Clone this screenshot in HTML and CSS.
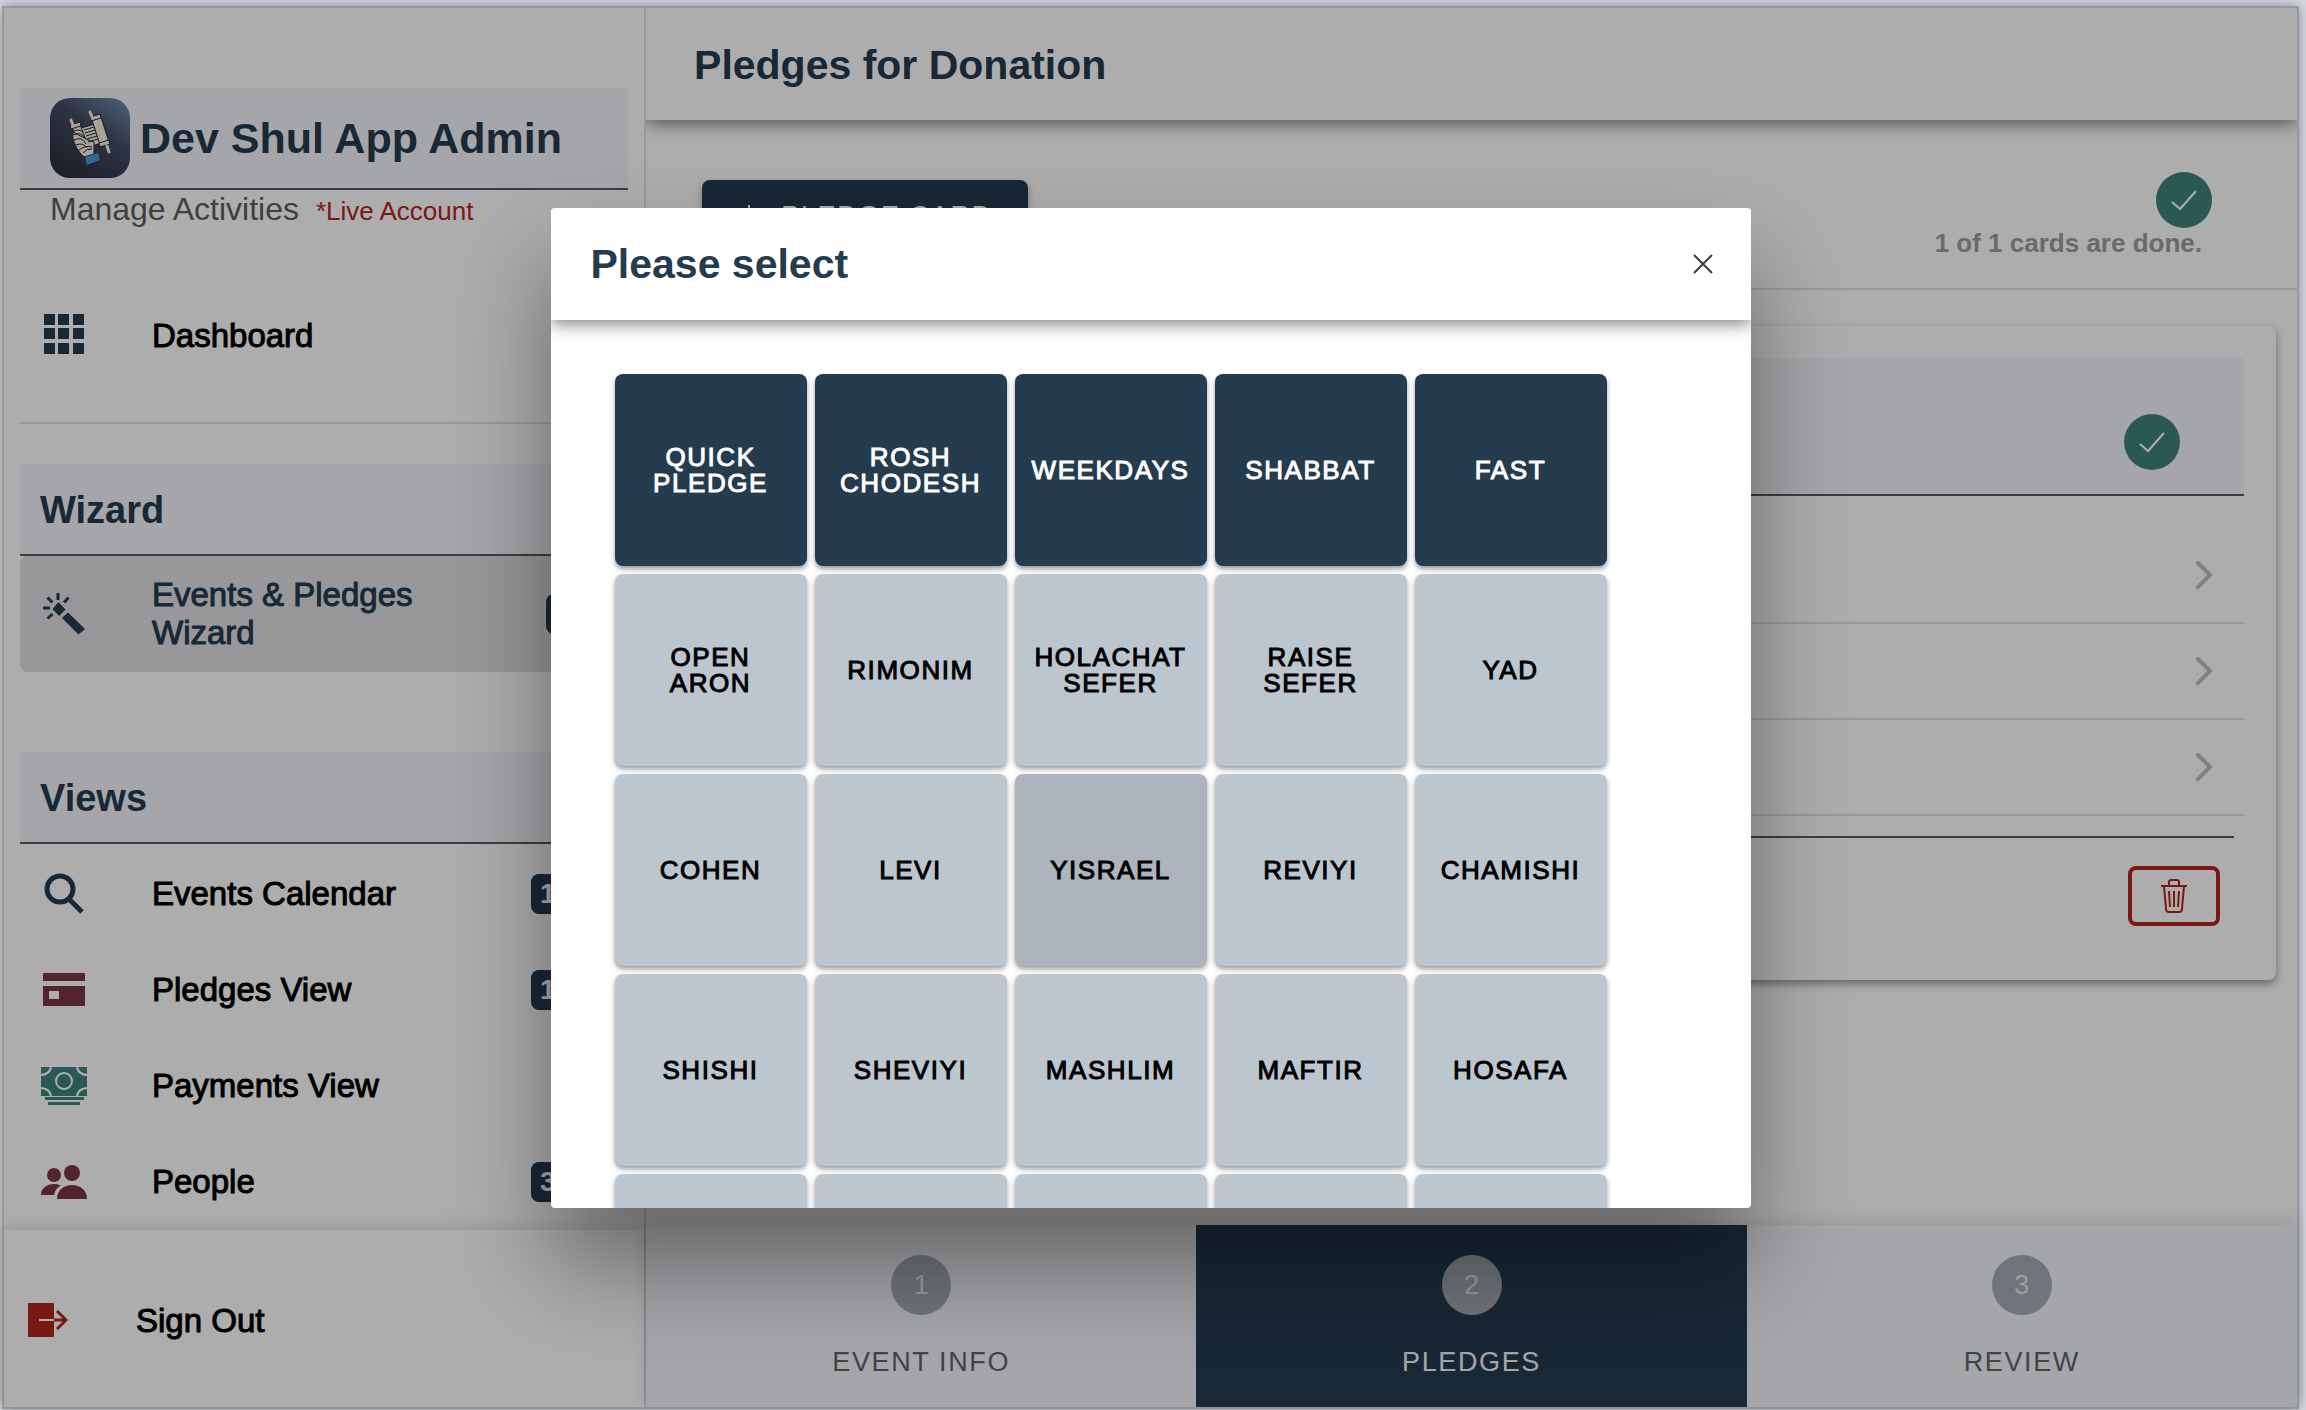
FILE: index.html
```html
<!DOCTYPE html>
<html lang="en">
<head>
  <meta charset="utf-8">
  <title>Dev Shul App Admin</title>
  <link rel="stylesheet" href="styles.css">
</head>
<body>
  <div class="app">
    <aside class="sidebar">
      <div class="menu">
        <header class="brand">
          <svg class="logo" viewBox="0 0 80 80">
            <defs>
              <linearGradient id="logo-bg" x1="1" y1="0" x2="0.3" y2="1">
                <stop offset="0" stop-color="#7590b4"/>
                <stop offset="0.45" stop-color="#434f66"/>
                <stop offset="1" stop-color="#2c2e3d"/>
              </linearGradient>
            </defs>
            <rect width="80" height="80" rx="20" fill="url(#logo-bg)"/>
            <g stroke="#23262f" fill="#f3f0e4">
              <path d="M31 30l14-4 6 19-15 5z"/>
              <path d="M42 22l9-3 8 25-9 3z"/>
              <path d="M22 29l8-3 8 22-8 3z"/>
              <path d="M40 19l10-3 1 4-10 3zM49 45l10-3 1 4-10 3zM20 27l10-3 1 4-10 3z"/>
              <path d="M23 34q4-4 10 0M23 34c-2 8 5 20 11 25l10-3v-12l-6-2z"/>
            </g>
            <g stroke="#f3f0e4" stroke-width="3" stroke-linecap="round">
              <path d="M40 14l2 5M21 22l2 5M57 48l2 6"/>
            </g>
            <g stroke="#23262f" fill="none">
              <path d="M23 37q8-4 13 4M24 42q8-4 12 4M26 47q7-3 11 3M29 52q6-5 13-3M33 55q4-5 9-4"/>
              <path d="M34 32l10-3M35 35l10-3M36 38l10-3M37 41l10-3M38 44l10-3"/>
            </g>
            <path d="M35 59l13-4 2 7-13 5z" fill="#4a9bd8"/>
          </svg>
          <h1>Dev Shul App Admin</h1>
        </header>
        <p class="subtitle">Manage Activities <span class="live">*Live Account</span></p>

        <a class="item dashboard" href="#">
          <svg class="icon navy" viewBox="0 0 48 48">
            <path d="M4 2h11v11H4zM18 2h11v11H18zM33 2h11v11H33zM4 16h11v11H4zM18 16h11v11H18zM33 16h11v11H33zM4 31h11v11H4zM18 31h11v11H18zM33 31h11v11H33z"/>
          </svg>
          <span class="label">Dashboard</span>
        </a>

        <h2 class="section">Wizard</h2>
        <a class="item active" href="#">
          <svg class="icon navy" viewBox="0 0 48 48">
            <path d="M18.500 12l7 7.500-6.500 6.500-6.500-7zM28 22.500l17 16.500-6.500 5.500L22 28z"/>
            <path d="M18 3v7M7.500 7.500l5 5M28.500 7.500l-4.500 5M3 18h7M7.500 28.500l5-4.500" stroke="currentColor" stroke-width="3"/>
          </svg>
          <span class="label">Events &amp; Pledges Wizard</span>
          <span class="badge">1</span>
        </a>

        <h2 class="section views">Views</h2>
        <nav class="view-links">
          <a class="item" href="#">
            <svg class="icon navy" viewBox="0 0 48 48">
              <g fill="none" stroke="currentColor" stroke-width="5">
                <circle cx="20" cy="19" r="13"/>
                <path d="M29 29l13 13"/>
              </g>
            </svg>
            <span class="label">Events Calendar</span>
            <span class="badge">12</span>
          </a>
          <a class="item" href="#">
            <svg class="icon maroon" viewBox="0 0 48 48">
              <path d="M4 7h40a1 1 0 0 1 1 1v7H3V8a1 1 0 0 1 1-1z"/>
              <path fill-rule="evenodd" d="M3 20h42v19a1 1 0 0 1-1 1H4a1 1 0 0 1-1-1zM9 25v8h10v-8z"/>
            </svg>
            <span class="label">Pledges View</span>
            <span class="badge">12</span>
          </a>
          <a class="item" href="#">
            <svg class="icon green" viewBox="0 0 48 48">
              <path d="M1 5h46v29H1zM5 35h39v3H5zM8 40h32v3H8z"/>
              <g fill="none" stroke="#fff" stroke-width="2">
                <circle cx="24" cy="19" r="8"/>
                <path d="M11 4c0 5-4 9-11 9M37 4c0 5 4 9 11 9M11 35c0-5-4-9-11-9M37 35c0-5 4-9 11-9"/>
              </g>
            </svg>
            <span class="label">Payments View</span>
          </a>
          <a class="item" href="#">
            <svg class="icon maroon" viewBox="0 0 48 48">
              <circle cx="32" cy="15" r="8"/>
              <path d="M17 41c0-9 7-14 15-14s15 5 15 14z"/>
              <circle cx="14" cy="17" r="7"/>
              <path d="M1 37c0-7 6-11 13-11 3 0 5 .6 7 1.600-4 2-6 5-7 9.400z"/>
            </svg>
            <span class="label">People</span>
            <span class="badge">35</span>
          </a>
        </nav>
      </div>
      <footer class="sidebar-footer">
        <a class="item" href="#">
          <svg class="icon red" viewBox="0 0 48 48">
            <rect x="4" y="6" width="26" height="34" rx="1"/>
            <path d="M15 23h15" stroke="#fff" stroke-width="2"/>
            <path d="M30 23h12M33 14l9 9-9 9" fill="none" stroke="currentColor" stroke-width="3"/>
          </svg>
          <span class="label">Sign Out</span>
        </a>
      </footer>
    </aside>

    <main class="main">
      <header class="toolbar">
        <h2>Pledges for Donation</h2>
      </header>

      <div class="content">
        <div class="summary">
          <button class="add-card" type="button">
            <svg viewBox="0 0 24 24"><path d="M12 1v22M1 12h22"/></svg>
            Pledge Card
          </button>
          <div class="status">
            <svg class="check" viewBox="0 0 56 56">
              <circle cx="28" cy="28" r="28"/>
              <path d="M16 30l8 7 16-18"/>
            </svg>
            <p>1 of 1 cards are done.</p>
          </div>
        </div>

        <section class="card">
          <div class="card-head">
            <svg class="check" viewBox="0 0 56 56">
              <circle cx="28" cy="28" r="28"/>
              <path d="M16 30l8 7 16-18"/>
            </svg>
          </div>
          <ul class="rows">
            <li><svg class="chevron" viewBox="0 0 20 30"><path d="M4 3l12 12L4 27"/></svg></li>
            <li><svg class="chevron" viewBox="0 0 20 30"><path d="M4 3l12 12L4 27"/></svg></li>
            <li><svg class="chevron" viewBox="0 0 20 30"><path d="M4 3l12 12L4 27"/></svg></li>
          </ul>
          <div class="card-foot">
            <button class="delete" type="button" aria-label="Delete">
              <svg viewBox="0 0 32 36">
                <path d="M3 8h26M6 8l2 23q0 3 3 3h10q3 0 3-3l2-23M11 8V4q0-2 2-2h6q2 0 2 2v4M11 13l1 16M16 13v16M21 13l-1 16"/>
              </svg>
            </button>
          </div>
        </section>
      </div>

      <nav class="steps">
        <button class="step" type="button"><span class="num">1</span>Event Info</button>
        <button class="step current" type="button"><span class="num">2</span>Pledges</button>
        <button class="step" type="button"><span class="num">3</span>Review</button>
      </nav>
    </main>

    <div class="backdrop">
      <div class="modal" role="dialog" aria-labelledby="modal-title">
        <header class="modal-head">
          <h2 id="modal-title">Please select</h2>
          <button class="close" type="button" aria-label="Close">
            <svg viewBox="0 0 24 24"><path d="M3 3l18 18M21 3L3 21"/></svg>
          </button>
        </header>
        <div class="tiles">
          <button class="tile dark" type="button">Quick Pledge</button>
          <button class="tile dark" type="button">Rosh Chodesh</button>
          <button class="tile dark" type="button">Weekdays</button>
          <button class="tile dark" type="button">Shabbat</button>
          <button class="tile dark" type="button">Fast</button>
          <button class="tile" type="button">Open Aron</button>
          <button class="tile" type="button">Rimonim</button>
          <button class="tile" type="button">Holachat Sefer</button>
          <button class="tile" type="button">Raise Sefer</button>
          <button class="tile" type="button">Yad</button>
          <button class="tile" type="button">Cohen</button>
          <button class="tile" type="button">Levi</button>
          <button class="tile selected" type="button">Yisrael</button>
          <button class="tile" type="button">Reviyi</button>
          <button class="tile" type="button">Chamishi</button>
          <button class="tile" type="button">Shishi</button>
          <button class="tile" type="button">Sheviyi</button>
          <button class="tile" type="button">Mashlim</button>
          <button class="tile" type="button">Maftir</button>
          <button class="tile" type="button">Hosafa</button>
          <button class="tile" type="button"></button>
          <button class="tile" type="button"></button>
          <button class="tile" type="button"></button>
          <button class="tile" type="button"></button>
          <button class="tile" type="button"></button>
        </div>
      </div>
    </div>
  </div>
</body>
</html>
```
FILE: styles.css
```css
* {
  box-sizing: border-box;
}

body {
  margin: 0;
  height: 100vh;
  padding: 8px 9px 3px 4px;
  background: #d4d7de;
  font-family: "Liberation Sans", Arial, sans-serif;
  font-size: 32px;
  color: #000;
  overflow: hidden;
}

h1, h2, p, ul {
  margin: 0;
  padding: 0;
}

button {
  font-family: inherit;
  border: none;
  padding: 0;
}

a {
  color: inherit;
  text-decoration: none;
}

.app {
  position: relative;
  display: grid;
  grid-template-columns: 28% 1fr;
  height: 100%;
  background: #fff;
  box-shadow: 0 0 0 2px #979a9c, 0 0 12px rgba(0, 0, 0, 0.5);
}

/* sidebar */
.sidebar {
  display: flex;
  flex-direction: column;
  min-height: 0;
  border-right: 2px solid #e0e0e0;
}

.menu {
  flex: 1;
  min-height: 0;
  overflow: hidden;
  padding: 80px 16px 0;
}

.brand {
  display: flex;
  align-items: center;
  gap: 10px;
  padding: 10px 30px;
  background: #f4f5fa;
  border-bottom: 2px solid #5a5a5a;
}

.brand h1 {
  font-size: 43px;
  color: #253b4e;
  white-space: nowrap;
}

.logo {
  flex: none;
  width: 80px;
  height: 80px;
}

.subtitle {
  padding-left: 30px;
  line-height: 38px;
  color: #5e5e5e;
}

.live {
  margin-left: 8px;
  font-size: 26px;
  color: #b3261e;
}

.item {
  display: flex;
  align-items: center;
  gap: 64px;
  min-height: 96px;
  padding: 0 32px 0 20px;
  font-size: 33px;
  line-height: 38px;
}

.label {
  flex: 1;
}

/* medium weight */
.label,
.tile {
  -webkit-text-stroke: 1px currentColor;
}

.icon {
  flex: none;
  width: 48px;
  height: 48px;
  fill: currentColor;
}

.navy { color: #253b4e; }
.maroon { color: #7d3545; }
.green { color: #3e847c; }
.red { color: #b3261e; }

.dashboard {
  margin: 58px 0 38px;
}

.section {
  height: 92px;
  padding-left: 20px;
  font-size: 38px;
  line-height: 92px;
  color: #253b4e;
  background: #f4f5fa;
  border-bottom: 2px solid #5a5a5a;
}

.dashboard + .section {
  position: relative;
  margin-top: 80px;
}

.dashboard + .section::before {
  content: "";
  position: absolute;
  top: -42px;
  left: 0;
  right: 0;
  border-top: 2px solid #e0e0e0;
}

.views {
  margin-top: 80px;
}

.view-links {
  padding-top: 2px;
}

.active {
  min-height: 116px;
  background: #e0e1e4;
  border-radius: 8px;
  color: #253b4e;
}

.badge {
  min-width: 50px;
  padding: 0 9px;
  border-radius: 8px;
  background: #253b4e;
  color: #fff;
  font-size: 28px;
  font-weight: bold;
  line-height: 40px;
  text-align: center;
}

.item:not(.active) .badge {
  min-width: 65px;
  text-align: left;
}

.sidebar-footer {
  display: flex;
  align-items: center;
  height: 177px;
  padding-top: 4px;
  box-shadow: 0 -4px 16px rgba(0, 0, 0, 0.12);
}

/* main pane */
.main {
  display: flex;
  flex-direction: column;
  min-width: 0;
  min-height: 0;
}

.toolbar {
  position: relative;
  height: 112px;
  padding-left: 48px;
  background: #fff;
  box-shadow: 0 4px 16px rgba(0, 0, 0, 0.5);
  clip-path: inset(0 0 -40px 0);
}

.toolbar h2,
.modal-head h2 {
  font-size: 41px;
  line-height: 114px;
  color: #253b4e;
}

.content {
  flex: 1;
  min-height: 0;
  overflow: hidden;
}

.summary {
  display: flex;
  justify-content: space-between;
  align-items: flex-start;
  height: 170px;
  padding: 52px 85px 0 56px;
  border-bottom: 2px solid #e0e0e0;
}

.add-card {
  display: flex;
  align-items: center;
  justify-content: center;
  gap: 20px;
  width: 326px;
  height: 72px;
  margin-top: 8px;
  border-radius: 8px;
  background: #253b4e;
  color: #fff;
  font-size: 27px;
  letter-spacing: 0.06em;
  text-transform: uppercase;
  box-shadow: 0 4px 8px rgba(0, 0, 0, 0.3);
}

.add-card svg {
  width: 24px;
  height: 24px;
  stroke: #fff;
  stroke-width: 2;
}

.status {
  display: flex;
  flex-direction: column;
  align-items: flex-end;
}

.status p {
  padding-right: 10px;
  font-size: 26px;
  font-weight: bold;
  line-height: 30px;
  color: #9c9c9c;
}

.check {
  width: 56px;
  height: 56px;
  fill: #3e847c;
}

.check path {
  fill: none;
  stroke: #fff;
  stroke-width: 2;
}

.card {
  height: 654px;
  margin: 36px 21px 0;
  padding: 32px 32px 0;
  border-radius: 8px;
  box-shadow: 0 4px 8px rgba(0, 0, 0, 0.4);
}

.card-head {
  display: flex;
  justify-content: flex-end;
  align-items: flex-end;
  height: 138px;
  padding: 0 64px 24px;
  background: #f4f5fa;
  border-bottom: 2px solid #5a5a5a;
}

.rows {
  margin-top: 32px;
  list-style: none;
}

.rows li {
  display: flex;
  justify-content: flex-end;
  align-items: center;
  height: 96px;
  padding-right: 30px;
  border-bottom: 2px solid #e0e0e0;
}

.chevron {
  width: 20px;
  height: 30px;
  fill: none;
  stroke: #bfbfbf;
  stroke-width: 4;
  stroke-linecap: round;
}

.card-foot {
  display: flex;
  justify-content: flex-end;
  margin: 20px 10px 0;
  padding: 28px 14px;
  border-top: 2px solid #5a5a5a;
}

.delete {
  display: flex;
  justify-content: center;
  align-items: center;
  width: 92px;
  height: 60px;
  border: 4px solid #b3261e;
  border-radius: 8px;
  background: none;
}

.delete svg {
  width: 32px;
  height: 36px;
  fill: none;
  stroke: #b3261e;
  stroke-width: 2;
}

.steps {
  display: grid;
  grid-template-columns: repeat(3, 1fr);
  height: 182px;
  box-shadow: 0 -4px 16px rgba(0, 0, 0, 0.12);
}

.step {
  display: flex;
  flex-direction: column;
  align-items: center;
  gap: 30px;
  padding-top: 30px;
  background: #f4f5fa;
  color: #646464;
  font-size: 27px;
  line-height: 34px;
  letter-spacing: 0.06em;
  text-transform: uppercase;
}

.num {
  width: 60px;
  border-radius: 50%;
  background: #a6adb6;
  color: #e6e8ec;
  line-height: 60px;
  letter-spacing: 0;
}

.current {
  background: #253b4e;
  color: #f4f5f8;
}

/* modal */
.backdrop {
  position: absolute;
  inset: 0;
  display: flex;
  align-items: center;
  justify-content: center;
  background: rgba(0, 0, 0, 0.32);
  overflow: hidden;
}

.modal {
  display: flex;
  flex-direction: column;
  width: 1200px;
  max-width: 90%;
  height: 1000px;
  max-height: 90%;
  border-radius: 4px;
  background: #fff;
  overflow: hidden;
  box-shadow: 0 56px 96px rgba(0, 0, 0, 0.4);
}

.modal-head {
  position: relative;
  flex: none;
  display: flex;
  justify-content: space-between;
  align-items: center;
  height: 112px;
  padding: 0 36px 0 40px;
  background: #fff;
  box-shadow: 0 4px 16px rgba(0, 0, 0, 0.5);
}

.close {
  display: flex;
  background: none;
}

.close svg {
  width: 24px;
  height: 24px;
  fill: none;
  stroke: #3c3c3c;
  stroke-width: 2;
}

.tiles {
  display: grid;
  grid-template-columns: repeat(5, 192px);
  grid-auto-rows: 192px;
  gap: 8px;
  padding: 54px 64px 0;
}

.tile {
  padding: 0 14px;
  border-radius: 8px;
  background: #bcc6cf;
  color: #000;
  font-size: 26px;
  line-height: 26px;
  letter-spacing: 0.06em;
  text-transform: uppercase;
  box-shadow: 0 3px 5px rgba(0, 0, 0, 0.4);
}

.tile.dark {
  background: #253b4e;
  color: #fff;
}

.tile.selected {
  background: #adb4be;
}
```
